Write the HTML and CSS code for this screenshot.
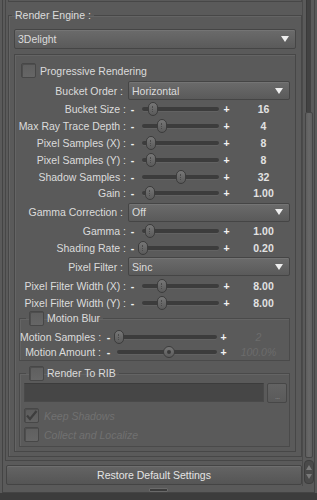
FILE: index.html
```html
<!DOCTYPE html>
<html lang="en">
<head>
    <meta charset="UTF-8">
    <meta name="viewport" content="width=device-width, initial-scale=1.0">
    <title>Render Settings</title>
    <link rel="stylesheet" href="styles.css">
</head>
<body>
    <div class="pane">
        <div class="main">
            <div class="left">
                <div class="page">
                    <div class="prev-box"></div>
                    <fieldset class="engine">
                        <legend>Render Engine :</legend>
                        <div class="combo combo-wide"><span>3Delight</span><i class="arrow"></i></div>

                        <div class="settings">
                            <div class="check-row"><span class="check"></span><span>Progressive Rendering</span></div>

                            <div class="drop-row"><span class="lbl">Bucket Order :</span><div class="combo"><span>Horizontal</span><i class="arrow"></i></div></div>

                            <div class="slider-row"><span class="lbl">Bucket Size :</span><b class="minus">-</b><div class="track"><span class="thumb" style="left:10px"></span></div><b class="plus">+</b><span class="val">16</span></div>
                            <div class="slider-row"><span class="lbl">Max Ray Trace Depth :</span><b class="minus">-</b><div class="track"><span class="thumb" style="left:19px"></span></div><b class="plus">+</b><span class="val">4</span></div>
                            <div class="slider-row"><span class="lbl">Pixel Samples (X) :</span><b class="minus">-</b><div class="track"><span class="thumb" style="left:8px"></span></div><b class="plus">+</b><span class="val">8</span></div>
                            <div class="slider-row"><span class="lbl">Pixel Samples (Y) :</span><b class="minus">-</b><div class="track"><span class="thumb" style="left:8px"></span></div><b class="plus">+</b><span class="val">8</span></div>
                            <div class="slider-row"><span class="lbl">Shadow Samples :</span><b class="minus">-</b><div class="track"><span class="thumb" style="left:38px"></span></div><b class="plus">+</b><span class="val">32</span></div>
                            <div class="slider-row"><span class="lbl">Gain :</span><b class="minus">-</b><div class="track"><span class="thumb" style="left:7px"></span></div><b class="plus">+</b><span class="val">1.00</span></div>

                            <div class="drop-row"><span class="lbl">Gamma Correction :</span><div class="combo"><span>Off</span><i class="arrow"></i></div></div>

                            <div class="slider-row"><span class="lbl">Gamma :</span><b class="minus">-</b><div class="track"><span class="thumb" style="left:7px"></span></div><b class="plus">+</b><span class="val">1.00</span></div>
                            <div class="slider-row"><span class="lbl">Shading Rate :</span><b class="minus">-</b><div class="track"><span class="thumb" style="left:0px"></span></div><b class="plus">+</b><span class="val">0.20</span></div>

                            <div class="drop-row"><span class="lbl">Pixel Filter :</span><div class="combo"><span>Sinc</span><i class="arrow"></i></div></div>

                            <div class="slider-row"><span class="lbl">Pixel Filter Width (X) :</span><b class="minus">-</b><div class="track"><span class="thumb" style="left:19px"></span></div><b class="plus">+</b><span class="val">8.00</span></div>
                            <div class="slider-row"><span class="lbl">Pixel Filter Width (Y) :</span><b class="minus">-</b><div class="track"><span class="thumb" style="left:19px"></span></div><b class="plus">+</b><span class="val">8.00</span></div>

                            <fieldset class="sub motion">
                                <legend><span class="check"></span><span>Motion Blur</span></legend>
                                <div class="slider-row"><span class="lbl">Motion Samples :</span><b class="minus">-</b><div class="track"><span class="thumb" style="left:0px"></span></div><b class="plus">+</b><span class="val off">2</span></div>
                                <div class="slider-row"><span class="lbl">Motion Amount :</span><b class="minus">-</b><div class="track"><span class="knob" style="left:49px"></span></div><b class="plus">+</b><span class="val off">100.0%</span></div>
                            </fieldset>

                            <fieldset class="sub rib">
                                <legend><span class="check"></span><span>Render To RIB</span></legend>
                                <div class="path-row"><div class="path"></div><div class="browse">...</div></div>
                                <div class="check-row off"><span class="check ticked"><svg width="13" height="13" viewBox="0 0 13 13"><path d="M2 6.5 L5 10 L11.5 2" fill="none" stroke="#3e3e3e" stroke-width="2.2"/></svg></span><span>Keep Shadows</span></div>
                                <div class="check-row off"><span class="check"></span><span>Collect and Localize</span></div>
                            </fieldset>
                        </div>
                    </fieldset>
                </div>
                <button class="restore">Restore Default Settings</button>
            </div>
            <div class="scrollbar">
                <div class="groove"></div>
                <div class="bar"></div>
                <div class="steps"><i class="up"></i><i class="down"></i></div>
            </div>
        </div>
        <div class="grip"></div>
    </div>
    <div class="status"></div>
</body>
</html>
```

FILE: styles.css
```css
* { box-sizing: border-box; }
body { margin: 0; width: 317px; height: 500px; overflow: hidden; background: #5a5a5a; font-family: "Liberation Sans", Arial, sans-serif; font-size: 10.5px; color: #dcdcdc; }

.pane { margin-left: 2px; width: 313px; height: 493px; border: 1px solid #444; border-top: 0; display: flex; flex-direction: column; }
.main { display: flex; height: 486px; }
.left { width: 299px; display: flex; flex-direction: column; }
.page { margin-left: 2px; height: 461px; padding-left: 1px; border-left: 1px solid #474747; border-bottom: 1px solid #474747; }
.prev-box { margin-left: 1px; height: 2px; border: 1px solid #474747; border-top: 0; }

fieldset { margin: 0; min-width: 0; border: 1px solid #474747; box-shadow: inset 1px 1px 0 #646464; }
legend { padding: 0 3px; line-height: 14px; }

.engine { margin: 6px 0 0 1px; padding: 7px 5px 4px 5px; }
.engine > legend { margin-left: -2px; }

.combo { height: 19px; display: flex; align-items: center; justify-content: space-between; padding: 0 6px 0 3px; border: 1px solid #454545; border-radius: 2px; background: linear-gradient(#6b6b6b, #5a5a5a); box-shadow: inset 0 1px 0 #747474; }
.combo-wide { height: 20px; }
.arrow { width: 0; height: 0; border-left: 4px solid transparent; border-right: 4px solid transparent; border-top: 6px solid #eeeeee; }

.settings { margin-top: 5px; padding: 8px 0 4px 0; border: 1px solid #474747; box-shadow: inset 1px 1px 0 #646464; }

.check-row { display: flex; align-items: center; gap: 4px; height: 15px; margin: 0 0 2px 6px; }
.check { display: inline-block; width: 15px; height: 15px; border: 1px solid #474747; border-radius: 2px; background: linear-gradient(#5f5f5f, #666666); box-shadow: inset 1px 1px 0 #4e4e4e; vertical-align: top; }
.check svg { display: block; }

.drop-row { display: grid; grid-template-columns: 112px 1fr; align-items: center; height: 21px; }
.drop-row .lbl { text-align: right; padding-right: 4px; white-space: nowrap; }
.drop-row .combo { margin: 0 5px 0 1px; }

.slider-row { display: grid; grid-template-columns: 112px 11px 83px 11px 1fr; align-items: center; height: 16.8px; }
.slider-row .lbl { text-align: right; padding-right: 1px; white-space: nowrap; }
.minus, .plus { text-align: center; color: #f2f2f2; font-weight: bold; }
.val { text-align: center; font-weight: bold; color: #e2e2e2; }
.val.off { color: #6c6c6c; font-style: italic; font-weight: normal; }

.track { position: relative; height: 14px; }
.track::before { content: ""; position: absolute; left: 4px; right: 2px; top: 5px; height: 4px; border-radius: 2px; background: #3c3c3c; box-shadow: 0 1px 0 #626262; }
.thumb { position: absolute; top: 0; width: 10px; height: 14px; border: 1px solid #3c3c3c; border-radius: 5px; background: linear-gradient(#777777, #5a5a5a); }
.thumb::after { content: ""; position: absolute; left: 3px; top: 3px; width: 1px; height: 6px; border-left: 1px dotted #4a4a4a; }
.knob { position: absolute; top: 1px; width: 12px; height: 12px; border: 1px solid #3c3c3c; border-radius: 50%; background: linear-gradient(#777777, #5a5a5a); }
.knob::after { content: ""; position: absolute; left: 3px; top: 3px; width: 4px; height: 4px; border-radius: 50%; background: #3a3a3a; }

.sub { margin: 0 5px 0 4px; padding: 0; border-color: #4a4a4a; }
.sub > legend { margin-left: 6px; line-height: 15px; height: 15px; }
.sub > legend .check { margin-right: 3px; }
.sub .slider-row { grid-template-columns: 83px 11px 105px 9px 1fr; height: 15.6px; }
.sub .slider-row .lbl { padding-right: 2px; }
.motion { padding-top: 3px; }
.motion .track::before { left: 3px; }
.rib { margin-top: 5px; padding: 2px 0 4px 0; }

.path-row { display: flex; margin: 0 2px 0 4px; gap: 3px; }
.path { width: 241px; height: 19px; background: #464646; border: 1px solid #4a4a4a; border-top-color: #3c3c3c; }
.browse { width: 20px; height: 20px; border: 1px solid #474747; border-radius: 2px; background: linear-gradient(#636363, #5a5a5a); color: #7c7c7c; font-size: 9px; text-align: center; line-height: 24px; letter-spacing: -1px; }

.rib .check-row { margin: 5px 0 0 4px; gap: 5px; }
.rib .check-row + .check-row { margin-top: 4px; }
.check-row.off { color: #717171; font-style: italic; }
.check.ticked { background: linear-gradient(#5c5c5c, #626262); }

.restore { margin: 4px 0 0 3px; height: 20px; border: 1px solid #444; border-radius: 2px; background: linear-gradient(#646464, #555555); box-shadow: inset 0 1px 0 #6e6e6e; font-family: inherit; font-size: 10.5px; color: #e4e4e4; padding: 0; }

.scrollbar { width: 12px; display: flex; flex-direction: column; align-items: center; border-left: 1px solid #4a4a4a; }
.groove { width: 5px; height: 112px; background: #424242; border-left: 1px solid #3a3a3a; }
.bar { width: 8px; height: 346px; border: 1px solid #454545; border-radius: 2px; background: linear-gradient(90deg, #5e5e5e, #686868, #5e5e5e); }
.steps { margin-top: 2px; width: 10px; height: 24px; border: 1px solid #3e3e3e; border-radius: 4px; background: #4a4a4a; display: flex; flex-direction: column; align-items: center; justify-content: space-between; padding: 4px 0; }
.steps i { width: 0; height: 0; border-left: 3px solid transparent; border-right: 3px solid transparent; }
.steps .up { border-bottom: 5px solid #7a7a7a; }
.steps .down { border-top: 5px solid #7a7a7a; }

.grip { width: 19px; height: 4px; margin: 2px auto 0; border: 1px solid #6a6a6a; border-radius: 1px; background: #3c3c3c; }
.status { height: 7px; background: #3c3c3c; }
```
